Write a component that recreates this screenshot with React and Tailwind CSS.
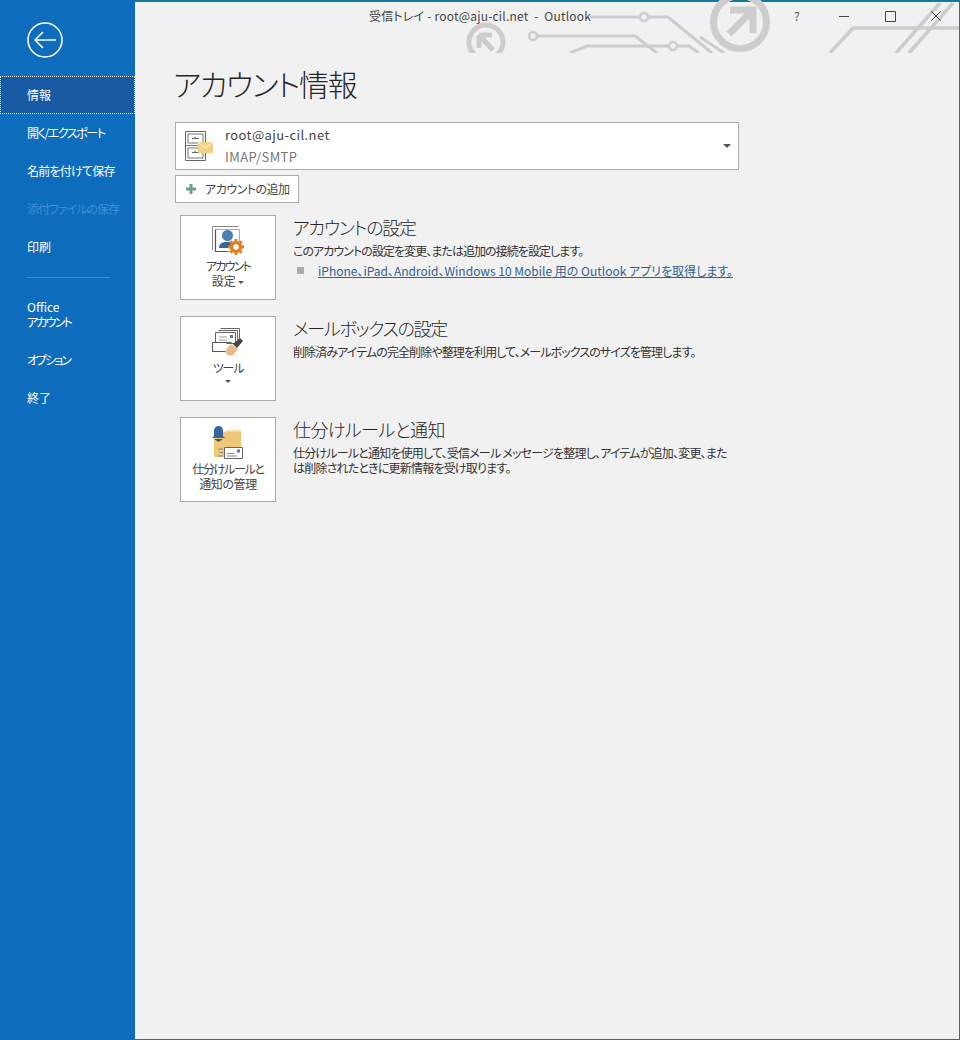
const FONT = "font-['Noto_Sans_CJK_JP','Noto_Sans',sans-serif] [font-feature-settings:'palt']";

function Circuit() {
  return (
    <svg className="absolute left-0 top-0" width="960" height="53" viewBox="0 0 960 53" fill="none" stroke="#cdcdcd">
      <circle cx="486" cy="42" r="17" strokeWidth="5" />
      <path d="M479 35h13M479 35v13M479 35l14 15" strokeWidth="5" />
      <circle cx="644" cy="17" r="4" strokeWidth="2.5" fill="#f1f1f1" />
      <path d="M590 17h50M648 17h20l44 36" strokeWidth="3" />
      <circle cx="533" cy="36" r="4" strokeWidth="2.5" fill="#f1f1f1" />
      <path d="M537 36h98l22 17" strokeWidth="3" />
      <path d="M570 53l17-7h82M677 46h12l10 7" strokeWidth="3" />
      <circle cx="673" cy="46" r="4" strokeWidth="2.5" fill="#f1f1f1" />
      <circle cx="740" cy="22" r="26.5" strokeWidth="7" />
      <path d="M730 10h23v23M753 10l-24 24" strokeWidth="7" />
      <path d="M700 37l24 16" strokeWidth="3" />
      <path d="M830 53l23-25h106" strokeWidth="3.5" />
      <path d="M896 53l44-50M909 53l44-50" strokeWidth="3.5" />
    </svg>
  );
}

function AccountBoxIcon() {
  return (
    <svg width="30" height="32" viewBox="0 0 30 32" fill="none">
      <path d="M1.5 1.5h20v29h-20z" stroke="#666" fill="#fff" />
      <path d="M1.5 15.5h20M4 4h15v9H4zM4 18h15v10H4z" stroke="#777" />
      <path d="M8 8.5h7M8 22.5h7M11 6.5v2M11 20.5v2" stroke="#666" />
      <path d="M14 12h15v11H14z" fill="#f2cf85" />
      <path d="M14 12l7.5 6 7.5-6" stroke="#fff" />
    </svg>
  );
}

function AccountIcon() {
  return (
    <svg width="32" height="30" viewBox="0 0 32 30" fill="none">
      <path d="M3.500 3.500h24v22h-24z" stroke="#aaa" fill="#fff" />
      <path d="M0.500 24V0.500h26" stroke="#888" />
      <path d="M3.500 3.500v22h12" stroke="#555" strokeWidth="1.200" />
      <circle cx="15.500" cy="9.500" r="5.500" fill="#4a7eb5" />
      <path d="M7 22c0-4 3-6 7-6h5v6z" fill="#34679f" />
      <g transform="translate(24 21)">
        <circle r="4.500" stroke="#e2802a" strokeWidth="3.500" />
        <path d="M0-8v3M0 5v3M-8 0h3M5 0h3M-5.700-5.700l2 2M3.700 3.700l2 2M5.700-5.700l-2 2M-3.700 3.700l-2 2" stroke="#e2802a" strokeWidth="2.800" />
      </g>
    </svg>
  );
}

function ToolIcon() {
  return (
    <svg width="32" height="28" viewBox="0 0 32 28" fill="none">
      <path d="M8.500 0.500h19v12M6.500 2.500h19v12M3.500 4.500h20v11h-20z" stroke="#666" fill="#fff" />
      <path d="M18 7h3v3h-3z" fill="#4a7eb5" />
      <path d="M7 9h8M7 12h8" stroke="#999" />
      <path d="M0.500 14.500h19M0.500 14.500v9h15" stroke="#555" />
      <path d="M0.500 15h14v8h-14z" fill="#fff" />
      <path d="M0.500 14.500v9h14" stroke="#555" />
      <path d="M13 23l6-7 7 5-5 6q-6 2-8-4z" fill="#e8b98a" />
      <path d="M21 16l7-6 3 3-6 7z" fill="#444" />
    </svg>
  );
}

function RuleIcon() {
  return (
    <svg width="32" height="34" viewBox="0 0 32 34" fill="none">
      <path d="M2 6h27v25H2z" fill="#eec877" />
      <path d="M12 6l3-2h14v2z" fill="#f6dea8" />
      <path d="M6.500 0c3 0 4.500 2 4.500 5v5l2 2H0l2-2V5c0-3 2-5 4.500-5z" fill="#34679f" />
      <path d="M2 13h9l-4.500 3z" fill="#555" />
      <path d="M12.500 21.500h18v11h-18z" stroke="#666" fill="#fff" />
      <path d="M25 23.500h3v3h-3z" fill="#4a7eb5" />
      <path d="M15 27.500h7M15 30h10M6 23h5M8 26.500h3M6 30h5" stroke="#888" />
    </svg>
  );
}

function Caret({ className = "" }) {
  return <span className={`inline-block w-0 h-0 border-l-[3px] border-r-[3px] border-t-[3px] border-l-transparent border-r-transparent border-t-[#555] ${className}`} />;
}

function NavItem({ children, active, disabled, className = "h-[38px]" }) {
  return (
    <div className={`flex items-center pl-[27px] pb-[2px] text-[12px] leading-[15px] ${className} ${active ? "bg-[#185aa3] outline-1 outline-dotted outline-offset-[-1px] outline-white" : ""} ${disabled ? "text-[#3f8fd6]" : "text-white"}`}>
      <span>{children}</span>
    </div>
  );
}

function Section({ icon, label, title, titleClass, labelClass = "mt-[2px]", children }) {
  return (
    <div className="flex h-[85px] mb-[16px] ml-[5px] w-[553px]">
      <div className="w-[96px] h-[85px] shrink-0 bg-white border border-[#ababab] flex flex-col items-center pt-[9px]">
        <div className="h-[32px] flex items-center justify-center">{icon}</div>
        <div className={`text-[12px] leading-[15px] text-[#444] text-center ${labelClass}`}>{label}</div>
      </div>
      <div className="ml-[17px] flex-1">
        <div className={`text-[18px] leading-[24px] font-light text-[#262626] ${titleClass}`}>{title}</div>
        <div className="text-[12px] leading-[15px] text-[#333] mt-[4px]">{children}</div>
      </div>
    </div>
  );
}

export default function App() {
  return (
    <div className={`relative w-[960px] h-[1040px] flex overflow-hidden bg-[#f1f1f1] ${FONT}`}>
      <aside className="w-[135px] shrink-0 bg-[#0e6cbd] flex flex-col">
        <div className="h-[76px] pl-[27px] pt-[22px]">
          <svg width="36" height="36" viewBox="0 0 36 36" fill="none" stroke="#fff" strokeWidth="1.500">
            <circle cx="18" cy="18" r="17" />
            <path d="M29 18H8M16 10l-8 8 8 8" />
          </svg>
        </div>
        <NavItem active>情報</NavItem>
        <NavItem><span className="tracking-[-1.4px]">開く/エクスポート</span></NavItem>
        <NavItem><span className="tracking-[-0.75px]">名前を付けて保存</span></NavItem>
        <NavItem disabled><span className="tracking-[-1px]">添付ファイルの保存</span></NavItem>
        <NavItem>印刷</NavItem>
        <div className="w-[83px] h-px ml-[27px] my-[11px] bg-[#3f8fd6]" />
        <NavItem className="h-[52px]"><span className="block">Office</span><span className="block tracking-[-1.8px]">アカウント</span></NavItem>
        <NavItem><span className="tracking-[-2px]">オプション</span></NavItem>
        <NavItem>終了</NavItem>
      </aside>

      <main className="relative flex-1 border-t-2 border-r border-b border-[#14799e] pl-[40px]">
        <h1 className="text-[30px] leading-[40px] font-light tracking-[-1.3px] -ml-[2px] text-[#262626] mt-[61px]">アカウント情報</h1>
        <div className="mt-[19px] w-[564px] h-[48px] bg-white border border-[#ababab] flex items-center pl-[8px] pr-[7px] relative">
          <AccountBoxIcon />
          <div className="ml-[11px] flex-1">
            <div className="text-[13px] leading-[18px] text-[#444] tracking-[0.4px] -mt-[1px]">root@aju-cil.net</div>
            <div className="text-[13px] leading-[18px] text-[#777] mt-[4px] tracking-[0.4px]">IMAP/SMTP</div>
          </div>
          <Caret className="border-l-[4px] border-r-[4px] border-t-[4px] border-t-[#333]" />
        </div>
        <div className="mt-[5px] mb-[12px] w-[124px] h-[28px] bg-white border border-[#ababab] flex items-center pl-[10px]">
          <svg width="10" height="10" viewBox="0 0 10 10"><path d="M3.500 0h3v3.500H10v3H6.500V10h-3V6.500H0v-3h3.500z" fill="#6a9e8e" /></svg>
          <span className="ml-[9px] text-[12px] text-[#444] tracking-[-0.5px]">アカウントの追加</span>
        </div>

        <Section
          icon={<AccountIcon />}
          label={<><div className="tracking-[-1.8px]">アカウント</div><div>設定 <Caret className="mb-[2px]" /></div></>}
          labelClass="mt-[1px]"
          title="アカウントの設定"
          titleClass="tracking-[-1.25px]"
        >
          <div className="tracking-[-0.95px]">このアカウントの設定を変更、または追加の接続を設定します。</div>
          <div className="flex items-center mt-[5px]">
            <span className="w-[7px] h-[7px] bg-[#ababab] ml-[4px] mr-[14px]" />
            <a className="text-[#2f6291] underline whitespace-nowrap">iPhone、iPad、Android、Windows 10 Mobile 用の Outlook アプリを取得します。</a>
          </div>
        </Section>
        <Section
          icon={<ToolIcon />}
          label={<><div className="tracking-[-1.2px]">ツール</div><div className="leading-[6px]"><Caret /></div></>}
          title="メールボックスの設定"
          titleClass="tracking-[-1.3px]"
        >
          <div className="tracking-[-0.9px]">削除済みアイテムの完全削除や整理を利用して、メールボックスのサイズを管理します。</div>
        </Section>
        <Section
          icon={<RuleIcon />}
          label={<><div className="tracking-[-1.3px]">仕分けルールと</div><div className="tracking-[-0.4px]">通知の管理</div></>}
          title="仕分けルールと通知"
          titleClass="tracking-[-0.55px]"
        >
          <div className="tracking-[-0.8px]">仕分けルールと通知を使用して、受信メール メッセージを整理し、アイテムが追加、変更、または削除されたときに更新情報を受け取ります。</div>
        </Section>
      </main>

      <Circuit />
      <div className="absolute top-[8px] left-0 w-full text-center text-[12px] leading-[16px] text-[#444] whitespace-pre tracking-[0.2px]">受信トレイ - root@aju-cil.net  -  Outlook</div>
      <div className="absolute top-[8px] left-[794px] text-[12px] leading-[16px] text-[#555]">?</div>
      <svg className="absolute left-[838px] top-[10px]" width="106" height="12" viewBox="0 0 106 12" fill="none" stroke="#444">
        <path d="M1 6.500h10" />
        <path d="M47.500 1.500h10v10h-10z" />
        <path d="M93 1l10 10M103 1L93 11" />
      </svg>
    </div>
  );
}
